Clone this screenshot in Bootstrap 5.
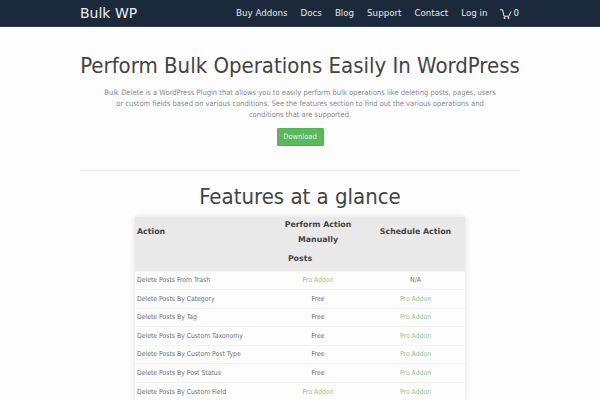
<!DOCTYPE html>
<html lang="en"><head><meta charset="utf-8">
<link rel="stylesheet" href="https://cdn.jsdelivr.net/npm/bootstrap@5.3.0/dist/css/bootstrap.min.css">
<style>
html,body{height:400px;overflow:hidden}
body{background:#fdfdfd;font-family:"DejaVu Sans",sans-serif;color:#555}
.topbar{background:#1b2a3a;height:27px;border-bottom:1px solid #2c3e50}
.wrap{width:440px;margin:0 auto}
.brandname{font-size:14px;color:#eee;text-decoration:none}
.toplink{font-size:8.7px;color:#e6e6e6;text-decoration:none}
.topnav{gap:13px;padding-top:2px;padding-right:1px}
.carty{gap:1px}
.herotitle{font-family:"DejaVu Sans Condensed","DejaVu Sans",sans-serif;font-size:22px;font-weight:400;color:#444;margin:26px 0 0;line-height:26px;white-space:nowrap}
.herotext{font-family:"DejaVu Sans Condensed","DejaVu Sans",sans-serif;font-size:7.5px;line-height:11.200px;color:#8a8a8a;width:400px;margin:8px auto 0}
.dlbtn{background:#5cb85c;color:#dff3df;font-family:"DejaVu Sans Condensed","DejaVu Sans",sans-serif;font-size:7.5px;border:1px solid #55b055;border-radius:1px;padding:0;width:47px;height:18px;line-height:16px;margin-top:7px}
.dlbtn:hover{background:#5cb85c;color:#dff3df}
.sepline{border:0;border-top:1px solid #e6e6e6;opacity:1;margin:24px 0 0}
.subtitle{font-family:"DejaVu Sans Condensed","DejaVu Sans",sans-serif;font-size:22px;font-weight:400;color:#444;line-height:26px;margin:13px 0 7px}
.feat{width:330px;margin:0 auto;box-shadow:0 0 6px rgba(0,0,0,.13);border-collapse:collapse;table-layout:fixed}
.feat th{background:#e9e9e9;color:#444;font-size:7.85px;font-weight:700;padding:0 2px;line-height:15.7px}
.feat thead th{height:31px}
.feat .grouprow th{height:23px;text-align:center}
.feat td{font-family:"DejaVu Sans Condensed","DejaVu Sans",sans-serif;font-size:6.8px;height:18.5px;padding:0 2px;color:#6e6e6e;border-top:1px solid #f2f2f2;line-height:10px;background:#fdfdfd;white-space:nowrap}
.feat .proad{color:#8cc68c}
.colA{width:135px}
.colB{width:96px}
.colC{width:99px}
</style></head>
<body>
<nav class="topbar d-flex align-items-center">
<div class="wrap d-flex justify-content-between align-items-center">
<a class="brandname" href="#">Bulk WP</a>
<div class="d-flex align-items-center topnav">
<a class="toplink" href="#">Buy Addons</a><a class="toplink" href="#">Docs</a><a class="toplink" href="#">Blog</a><a class="toplink" href="#">Support</a><a class="toplink" href="#">Contact</a><a class="toplink" href="#">Log in</a>
<a class="toplink d-flex align-items-center carty" href="#"><svg width="12" height="10" viewBox="0 0 12 10" fill="none" stroke="#eee" stroke-width="1"><path d="M0 .8h2.600l1.400 6.400h5L11 2.500"/><circle cx="4.500" cy="9" r=".9" fill="#eee" stroke="none"/><circle cx="8.500" cy="9" r=".9" fill="#eee" stroke="none"/></svg>0</a>
</div></div></nav>
<main class="wrap">
<section class="text-center">
<h1 class="herotitle">Perform Bulk Operations Easily In WordPress</h1>
<p class="herotext">Bulk Delete is a WordPress Plugin that allows you to easily perform bulk operations like deleting posts, pages, users or custom fields based on various conditions. See the features section to find out the various operations and conditions that are supported.</p>
<a class="btn dlbtn" href="#">Download</a>
</section>
<hr class="sepline">
<h2 class="subtitle text-center">Features at a glance</h2>
<table class="feat">
<colgroup><col class="colA"><col class="colB"><col class="colC"></colgroup>
<thead><tr><th>Action</th><th class="text-center">Perform Action Manually</th><th class="text-center">Schedule Action</th></tr></thead>
<tbody>
<tr class="grouprow"><th colspan="3">Posts</th></tr>
<tr><td>Delete Posts From Trash</td><td class="text-center proad">Pro Addon</td><td class="text-center">N/A</td></tr>
<tr><td>Delete Posts By Category</td><td class="text-center">Free</td><td class="text-center proad">Pro Addon</td></tr>
<tr><td>Delete Posts By Tag</td><td class="text-center">Free</td><td class="text-center proad">Pro Addon</td></tr>
<tr><td>Delete Posts By Custom Taxonomy</td><td class="text-center">Free</td><td class="text-center proad">Pro Addon</td></tr>
<tr><td>Delete Posts By Custom Post Type</td><td class="text-center">Free</td><td class="text-center proad">Pro Addon</td></tr>
<tr><td>Delete Posts By Post Status</td><td class="text-center">Free</td><td class="text-center proad">Pro Addon</td></tr>
<tr><td>Delete Posts By Custom Field</td><td class="text-center proad">Pro Addon</td><td class="text-center proad">Pro Addon</td></tr>
</tbody></table>
</main>
<script src="https://cdn.jsdelivr.net/npm/bootstrap@5.3.0/dist/js/bootstrap.bundle.min.js"></script>
</body></html>
